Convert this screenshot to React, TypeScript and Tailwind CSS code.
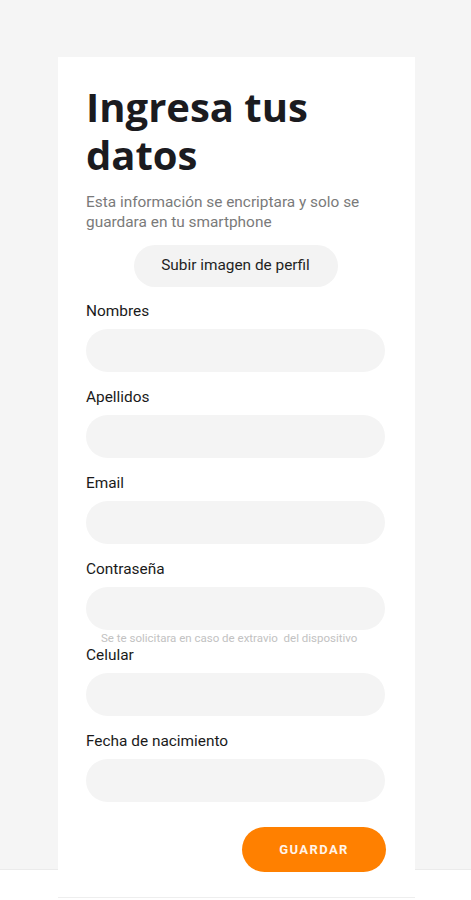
import React from "react";

const fields = [
  { label: "Nombres" },
  { label: "Apellidos" },
  { label: "Email" },
  { label: "Contraseña", hint: "Se te solicitara en caso de extravio  del dispositivo" },
  { label: "Celular" },
  { label: "Fecha de nacimiento" },
];

function Field({ label, hint }: { label: string; hint?: string }) {
  return (
    <div className="flex flex-col">
      <label className="text-[15.4px] leading-[20px] text-[#1a1a1a]">{label}</label>
      <div className="mt-2 h-[43px] w-full rounded-full bg-[#f4f4f4]" />
      {hint ? (
        <p className="h-[15px] whitespace-pre pl-[15px] pt-[1px] text-[11.5px] leading-[14px] text-[#c2c2c2]">
          {hint}
        </p>
      ) : (
        <div className="h-[15px]" />
      )}
    </div>
  );
}

export default function App() {
  return (
    <div
      className="min-h-[900px] w-full bg-[linear-gradient(to_bottom,#f5f5f5_869px,#ebebeb_869px,#ebebeb_870px,#ffffff_870px)] pt-[57px]"
      style={{ fontFamily: "Roboto, 'Liberation Sans', sans-serif" }}
    >
      <div className="ml-[58px] flex h-[841px] w-[357px] flex-col border-b border-[#eeeeee] bg-white pl-[28px] pr-[30px] pt-[26px]">
        <h1
          className="text-[40px] font-bold leading-[48px] text-[#1b1b1f]"
          style={{ fontFamily: "'Open Sans', 'DejaVu Sans', sans-serif" }}
        >
          Ingresa tus
          <br />
          datos
        </h1>
        <p className="mt-[13px] text-[15.4px] leading-[20px] text-[#7a7a7a]">
          Esta información se encriptara y solo se guardara en tu smartphone
        </p>
        <div className="mt-[13px] flex justify-center">
          <button className="h-[42px] w-[204px] rounded-full bg-[#f3f3f3] text-[15.4px] text-[#1f1f1f]">
            Subir imagen de perfil
          </button>
        </div>
        <div className="mt-[14px] flex flex-col">
          {fields.map((f) => (
            <Field key={f.label} label={f.label} hint={f.hint} />
          ))}
        </div>
        <div className="mt-[10px] flex justify-end">
          <button className="-mr-[1px] h-[45px] w-[144px] rounded-full bg-[#ff8000] text-[13px] font-bold tracking-[0.11em] text-[#fff4ea]">
            GUARDAR
          </button>
        </div>
      </div>
    </div>
  );
}
